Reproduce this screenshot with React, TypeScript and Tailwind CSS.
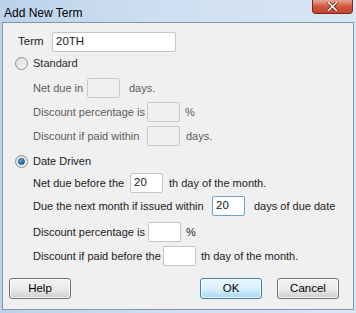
import React from 'react'

const font = { fontFamily: '"Liberation Sans", Arial, sans-serif' }

function Radio({ checked }: { checked?: boolean }) {
  return (
    <span className="flex h-[13px] w-[13px] shrink-0 items-center justify-center rounded-full border border-[#8e8f8f] bg-gradient-to-br from-[#dcdcdc] to-[#f8f8f8]">
      {checked && (
        <span className="h-[7px] w-[7px] rounded-full border border-[#1b4c7a] bg-gradient-to-br from-[#7ab5e6] to-[#1a5b99]" />
      )}
    </span>
  )
}

function Box({ value, disabled, focus, w = 'w-[33px]' }: { value?: string; disabled?: boolean; focus?: boolean; w?: string }) {
  const border = disabled
    ? 'border-[#c9cbcf] bg-[#f0f0f0]'
    : focus
      ? 'border-[#6ea3d3] bg-white'
      : 'border-[#c3c6cb] bg-white'
  return (
    <span className={`flex h-[20px] ${w} shrink-0 items-center rounded-[2px] border ${border} px-[3px] text-[11.5px] text-[#1a1a1a]`}>
      {value}
    </span>
  )
}

function Row({
  label,
  labelW,
  after,
  gap,
  mt,
  disabled,
  value,
  focus,
}: {
  label: string
  labelW: string
  after: string
  gap: string
  mt: string
  disabled?: boolean
  value?: string
  focus?: boolean
}) {
  const color = disabled ? 'text-[#5c5c5c]' : 'text-[#222]'
  return (
    <div className={`flex h-[20px] items-center pl-[18px] ${mt} ${color}`}>
      <span className={`${labelW} shrink-0 whitespace-nowrap`}>{label}</span>
      <Box value={value} disabled={disabled} focus={focus} />
      <span className={`${gap} whitespace-nowrap`}>{after}</span>
    </div>
  )
}

function Button({ children, primary }: { children: React.ReactNode; primary?: boolean }) {
  const cls = primary
    ? 'border-[#3c7fb1] from-[#eaf6fd] via-[#d9f0fc] to-[#a7d9f5]'
    : 'border-[#707070] from-[#f2f2f2] via-[#ebebeb] to-[#cfcfcf]'
  return (
    <div className={`flex h-[21px] w-[62px] items-center justify-center rounded-[3px] border bg-gradient-to-b ${cls} text-[11.5px] text-black shadow-[inset_0_0_0_1px_rgba(255,255,255,0.7)]`}>
      {children}
    </div>
  )
}

export default function App() {
  return (
    <div style={font} className="flex h-[313px] w-[356px] flex-col bg-gradient-to-r from-[#bcd2ea] via-[#cfe0f2] to-[#d9e6f4]">
      <div className="flex h-[22px] items-start justify-between">
        <span className="ml-[4px] mt-[4px] text-[12px] text-black">Add New Term</span>
        <div className="mr-[3px] flex h-[14px] w-[41px] items-center justify-center rounded-b-[4px] border border-t-0 border-[#7a2a1e] bg-gradient-to-b from-[#e8a493] via-[#d2553c] to-[#c6442b]">
          <svg width="11" height="9" viewBox="0 0 11 9">
            <path d="M1.5 0.5 L9.5 8.5 M9.5 0.5 L1.5 8.5" stroke="#4a1a12" strokeWidth="3" strokeLinecap="square" />
            <path d="M1.5 0.5 L9.5 8.5 M9.5 0.5 L1.5 8.5" stroke="#fff" strokeWidth="1.6" strokeLinecap="square" />
          </svg>
        </div>
      </div>

      <div className="mx-[2px] mb-[3px] flex flex-1 flex-col border border-[#8495a8] bg-[#f0f0f0] pl-[12px] text-[11px]">
        <div className="mt-[9px] flex h-[20px] items-center text-[#222]">
          <span className="ml-[3px] w-[34px] shrink-0 text-[11.5px]">Term</span>
          <Box value="20TH" w="w-[124px]" />
        </div>

        <div className="mt-[3px] flex h-[16px] items-center gap-[5px] text-[#2a2a2a]">
          <Radio />
          <span>Standard</span>
        </div>
        <Row disabled label="Net due in" labelW="w-[54px]" after="days." gap="ml-[9px]" mt="mt-[7px]" />
        <Row disabled label="Discount percentage is" labelW="w-[114px]" after="%" gap="ml-[5px]" mt="mt-[4px]" />
        <Row disabled label="Discount if paid within" labelW="w-[114px]" after="days." gap="ml-[6px]" mt="mt-[4px]" />

        <div className="mt-[7px] flex h-[16px] items-center gap-[5px] text-[#222]">
          <Radio checked />
          <span>Date Driven</span>
        </div>
        <Row label="Net due before the" labelW="w-[97px]" value="20" after="th day of the month." gap="ml-[6px]" mt="mt-[4px]" />
        <Row label="Due the next month if issued within" labelW="w-[179px]" value="20" focus after="days of due date" gap="ml-[9px]" mt="mt-[3px]" />
        <Row label="Discount percentage is" labelW="w-[115px]" after="%" gap="ml-[5px]" mt="mt-[6px]" />
        <Row label="Discount if paid before the" labelW="w-[130px]" after="th day of the month." gap="ml-[5px]" mt="mt-[4px]" />

        <div className="mt-[12px] flex items-center pr-[14px]">
          <div className="-ml-[6px]">
            <Button>Help</Button>
          </div>
          <div className="flex-1" />
          <div className="flex gap-[15px]">
            <Button primary>OK</Button>
            <Button>Cancel</Button>
          </div>
        </div>
      </div>
    </div>
  )
}
